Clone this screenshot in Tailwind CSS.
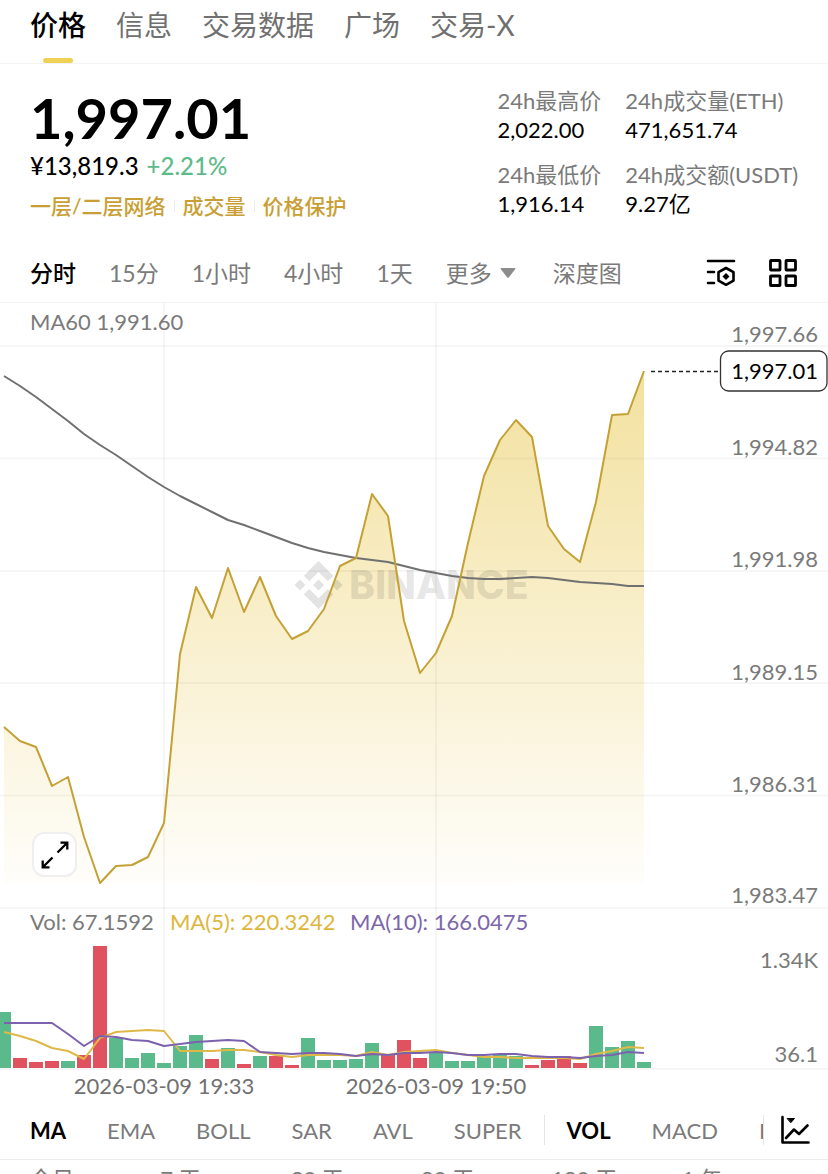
<!DOCTYPE html>
<html lang="zh-CN">
<head>
  <meta charset="UTF-8" />
  <meta name="viewport" content="width=device-width, initial-scale=1.0" />
  <title>ETH/USDT 1,997.01</title>

  <!-- Tailwind CSS -->
  <script src="https://cdn.jsdelivr.net/npm/@tailwindcss/browser@4"></script>
</head>

<body class="h-screen overflow-hidden bg-white text-black font-[Lato,'Noto_Sans_CJK_SC',sans-serif]">
  <!-- Page tabs -->
  <nav class="flex h-16 gap-[30px] border-b border-[#f3f3f3] px-[30px] text-[28px] leading-[50px] whitespace-nowrap text-[#707070]">
    <a href="#price" class="relative font-medium text-black">价格
      <span class="absolute bottom-0 left-1/2 h-[5px] w-[30px] -translate-x-1/2 rounded-sm bg-[#efd255]"></span>
    </a>
    <a href="#info">信息</a>
    <a href="#data">交易数据</a>
    <a href="#square">广场</a>
    <a href="#trade-x">交易-X</a>
  </nav>

  <!-- Price summary -->
  <header id="price" class="flex justify-between px-[30px] pt-[22px]">
    <div>
      <h1 class="text-[56px] leading-[64px] font-bold">1,997.01</h1>
      <p class="flex gap-2 text-[24px] leading-8 font-medium">
        <span>¥13,819.3</span>
        <span class="text-[#5dba8a]">+2.21%</span>
      </p>
      <div class="flex items-center gap-2 text-[21px] leading-[48px] font-medium whitespace-nowrap text-[#c99f35]">
        <a href="#layer">一层/二层网络</a>
        <span class="h-3 w-px bg-[#ececec]"></span>
        <a href="#volume">成交量</a>
        <span class="h-3 w-px bg-[#ececec]"></span>
        <a href="#protect">价格保护</a>
      </div>
    </div>
    <dl class="grid grid-cols-[auto_auto] content-start gap-x-6 gap-y-4 text-[22px] leading-[29px] whitespace-nowrap">
      <div>
        <dt class="text-[#7a7a7a]">24h最高价</dt>
        <dd>2,022.00</dd>
      </div>
      <div>
        <dt class="text-[#7a7a7a]">24h成交量(ETH)</dt>
        <dd>471,651.74</dd>
      </div>
      <div>
        <dt class="text-[#7a7a7a]">24h最低价</dt>
        <dd>1,916.14</dd>
      </div>
      <div>
        <dt class="text-[#7a7a7a]">24h成交额(USDT)</dt>
        <dd>9.27亿</dd>
      </div>
    </dl>
  </header>

  <!-- Interval bar -->
  <div class="mt-3.5 flex h-[59px] items-center justify-between border-b border-[#f3f3f3] px-[30px]">
    <div class="flex gap-[33px] text-[23px] whitespace-nowrap text-[#7a7a7a]">
      <button class="font-medium text-black">分时</button>
      <button>15分</button>
      <button>1小时</button>
      <button>4小时</button>
      <button>1天</button>
      <button class="flex items-center gap-2">更多
        <svg class="h-[10px] w-4" viewBox="0 0 16 10" fill="#8c8c8c"><path d="M1.500 0h13q1.500 0 .6 1.200L9 9.300q-1 1-2 0L.9 1.200Q0 0 1.500 0z" /></svg>
      </button>
      <button class="pl-1">深度图</button>
    </div>
    <div class="flex gap-8">
      <button aria-label="图表设置">
        <svg class="size-[30px]" viewBox="0 0 30 30" fill="none" stroke="#000" stroke-width="2.600" stroke-linecap="round" stroke-linejoin="round">
          <path d="M2 3h26M2 14h6M2 25h6" />
          <path d="M20 10l7.500 4.200v8.400L20 26.800l-7.500-4.200v-8.400z" />
          <path d="M20 14.900l3.500 3.500-3.500 3.500-3.500-3.500z" fill="#000" stroke="none" />
        </svg>
      </button>
      <button aria-label="布局">
        <svg class="size-[30px]" viewBox="0 0 30 30" fill="none" stroke="#000" stroke-width="2.800" stroke-linejoin="round">
          <rect x="2.500" y="2.500" width="9.500" height="9.500" rx="0.500" />
          <rect x="18" y="2.500" width="9.500" height="9.500" rx="0.500" />
          <rect x="2.500" y="18" width="9.500" height="9.500" rx="0.500" />
          <rect x="18" y="18" width="9.500" height="9.500" rx="0.500" />
        </svg>
      </button>
    </div>
  </div>

  <!-- Price + volume chart -->
  <main class="relative">
    <svg class="block h-auto w-full text-[22px]" viewBox="0 303 828 798">
      <defs>
        <linearGradient id="fade" gradientUnits="userSpaceOnUse" x1="0" y1="371" x2="0" y2="883">
          <stop offset="0" stop-color="#eacb58" stop-opacity="0.580" />
          <stop offset="1" stop-color="#eacb58" stop-opacity="0.030" />
        </linearGradient>
      </defs>

      <polygon id="area" fill="url(#fade)" />

      <!-- grid -->
      <g stroke="#000" stroke-opacity="0.035" stroke-width="2">
        <path d="M0 346h828M0 458.500h828M0 571h828M0 683h828M0 795.500h828M0 908h828M0 1069h828" />
        <path d="M164 303v765M436 303v765" />
      </g>

      <!-- watermark -->
      <g fill="#000" fill-opacity="0.110">
        <path transform="translate(294.500 561) scale(0.380)" d="M38.730 53.200l24.590-24.580 24.600 24.600 14.300-14.310L63.320 0l-38.900 38.900zM0 63.310l14.300-14.310 14.310 14.310-14.310 14.300zM38.730 73.410l24.590 24.590 24.600-24.600 14.310 14.290-38.900 38.910-38.910-38.880zM98 63.310l14.300-14.310 14.310 14.300-14.310 14.320zM77.830 63.300L63.320 48.780 48.810 63.280l14.510 14.500z" />
        <text x="349" y="599" class="font-[Inter,sans-serif] text-[39px] font-extrabold">BINANCE</text>
      </g>

      <polyline id="ma60" fill="none" stroke="#707070" stroke-width="2" stroke-linejoin="round" />
      <polyline id="line" fill="none" stroke="#c4a136" stroke-width="2" stroke-linejoin="round" />

      <!-- current price -->
      <path d="M651 371.500h69" stroke="#222" stroke-width="1.500" stroke-dasharray="4 3" />
      <rect x="720.500" y="351" width="106.500" height="40" rx="8" fill="#fff" stroke="#333" stroke-width="1.300" />

      <text x="30" y="330" fill="#7a7a7a">MA60 1,991.60</text>
      <g fill="#7a7a7a" text-anchor="end">
        <text x="818" y="342">1,997.66</text>
        <text x="818" y="379" fill="#000">1,997.01</text>
        <text x="818" y="455">1,994.82</text>
        <text x="818" y="567">1,991.98</text>
        <text x="818" y="680">1,989.15</text>
        <text x="818" y="792">1,986.31</text>
        <text x="818" y="903">1,983.47</text>
        <text x="818" y="968">1.34K</text>
        <text x="818" y="1062">36.1</text>
      </g>

      <text x="30" y="930" fill="#7a7a7a">Vol: 67.1592</text>
      <text x="170" y="930" fill="#deb63c">MA(5): 220.3242</text>
      <text x="350" y="930" fill="#7c66ab">MA(10): 166.0475</text>

      <g id="bars"></g>
      <polyline id="ma5" fill="none" stroke="#dfb948" stroke-width="2" stroke-linejoin="round" />
      <polyline id="ma10" fill="none" stroke="#7c62ae" stroke-width="2" stroke-linejoin="round" />

      <g fill="#707070" text-anchor="middle">
        <text x="164" y="1094">2026-03-09 19:33</text>
        <text x="436" y="1094">2026-03-09 19:50</text>
      </g>
    </svg>

    <button aria-label="全屏" class="absolute bottom-56 left-8 flex size-[45px] items-center justify-center rounded-xl border-2 border-[#efefef] bg-white">
      <svg class="size-7" viewBox="0 0 28 28" fill="none" stroke="#000" stroke-width="2.300">
        <path d="M16.500 11.500L26 2M19.500 1.700h6.800v6.800M11.500 16.500L2 26M1.700 19.500v6.800h6.800" />
      </svg>
    </button>
  </main>

  <!-- Indicators -->
  <div class="flex h-[59px] items-center border-b border-[#ececec] pl-[30px] text-[22px] text-[#7a7a7a]">
    <div class="flex min-w-0 flex-1 items-center gap-[41px] overflow-hidden">
      <button class="font-bold text-black">MA</button>
      <button>EMA</button>
      <button>BOLL</button>
      <button>SAR</button>
      <button>AVL</button>
      <button>SUPER</button>
      <span class="-mx-[19px] h-[30px] w-px shrink-0 bg-[#e4e4e4]"></span>
      <button class="font-bold text-black">VOL</button>
      <button>MACD</button>
      <button>RSI</button>
    </div>
    <button aria-label="指标" class="flex h-[30px] items-center border-l border-[#e4e4e4] pr-[18px] pl-4">
      <svg class="size-[30px]" viewBox="0 0 30 30" fill="none" stroke="#000" stroke-width="2.600" stroke-linecap="round" stroke-linejoin="round">
        <path d="M2.500 2v25.500H28.500" />
        <path d="M6 23l8-8.500 5 4.500 8.500-8.500" />
        <path d="M7.500 3.500h7l-3.500 4z" fill="#000" stroke-width="1" />
      </svg>
    </button>
  </div>

  <!-- Performance by range -->
  <div class="grid grid-cols-6 pr-4 pl-[30px] text-[22px] leading-[38px] text-[#7a7a7a]">
    <span>今日</span>
    <span>7 天</span>
    <span>30 天</span>
    <span>90 天</span>
    <span>180 天</span>
    <span>1 年</span>
  </div>

  <!-- Chart data -->
  <script>
    (() => {
      const STEP = 16;
      const BASE = 1068;
      const price = [727, 741, 747, 786, 777, 837, 883, 866, 865, 857, 823, 654, 587, 618, 568, 612, 577, 616, 639, 631, 609,
        566, 558, 494, 516, 621, 673, 653, 616, 543, 476, 440, 420, 437, 526, 549, 562, 502, 415, 414, 371];
      const ma60 = [376, 386, 397, 409, 421, 434, 445, 455, 466, 477, 487, 496, 504, 512, 520, 525, 531, 537, 543, 548, 552,
        555, 558, 560, 562, 566, 570, 573, 576, 578, 579, 579, 578, 577, 578, 580, 582, 583, 584, 586, 586];
      const ma5 = [1032, 1036, 1041, 1048, 1051, 1059, 1038, 1032, 1031, 1030, 1031, 1051, 1051, 1051, 1050, 1050, 1052, 1055, 1057, 1055, 1055,
        1055, 1056, 1052, 1055, 1052, 1051, 1050, 1053, 1055, 1057, 1057, 1058, 1058, 1058, 1058, 1059, 1054, 1051, 1047, 1048];
      const ma10 = [1023, 1023, 1023, 1023, 1034, 1046, 1036, 1037, 1040, 1041, 1046, 1044, 1042, 1041, 1040, 1041, 1052, 1053, 1054, 1053, 1053,
        1054, 1056, 1054, 1055, 1053, 1053, 1052, 1053, 1055, 1055, 1054, 1054, 1056, 1057, 1057, 1058, 1056, 1055, 1052, 1053];
      // negative = falling candle
      const volume = [56, -10, -6, -7, 7, -13, -122, 30, 10, 15, 5, 22, 33, -9, 20, -4, 12, -12, -3, 30, 8,
        8, 9, 25, -13, -28, -10, 15, 7, 7, 11, 13, 12, -3, -8, -12, -5, 42, 21, 27, 6];

      const x = (i) => 4 + i * STEP;
      const points = (ys) => ys.map((y, i) => `${x(i)},${y}`).join(' ');

      document.getElementById('line').setAttribute('points', points(price));
      document.getElementById('area').setAttribute('points', `4,883 ${points(price)} 644,883`);
      document.getElementById('ma60').setAttribute('points', points(ma60));
      document.getElementById('ma5').setAttribute('points', points(ma5));
      document.getElementById('ma10').setAttribute('points', points(ma10));

      document.getElementById('bars').innerHTML = volume.map((v, i) => {
        const h = Math.abs(v);
        return `<rect x="${x(i) - 7}" y="${BASE - h}" width="14" height="${h}" fill="${v < 0 ? '#e05260' : '#5bba8b'}" />`;
      }).join('');
    })();
  </script>
</body>
</html>
